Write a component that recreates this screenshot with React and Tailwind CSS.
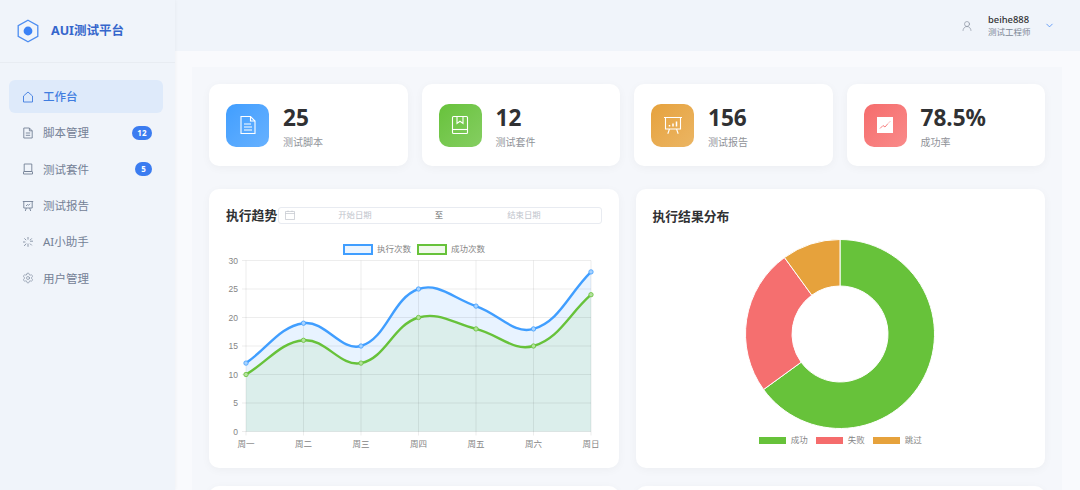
import React from 'react';
import { ChevronDown, Settings, UserRound } from 'lucide-react';

const FONT = "font-['Noto_Sans','Noto_Sans_CJK_SC',sans-serif]";

// --- Chart data ---
const DAYS = ['周一', '周二', '周三', '周四', '周五', '周六', '周日'];
const RUNS = [12, 19, 15, 25, 22, 18, 28];
const PASSED = [10, 16, 12, 20, 18, 15, 24];
const PLOT = { left: 20, right: 365, top: 21.5, bottom: 192.5 };

const xAt = (i) => PLOT.left + (i * (PLOT.right - PLOT.left)) / 6;
const yAt = (v) => PLOT.bottom - (v * (PLOT.bottom - PLOT.top)) / 30;

// same spline as a line chart with tension 0.4
function linePath(values, tension = 0.4) {
  const pts = values.map((v, i) => [xAt(i), yAt(v)]);
  const cps = pts.map((p, i) => {
    const prev = pts[i - 1] || p;
    const next = pts[i + 1] || p;
    const d01 = Math.hypot(p[0] - prev[0], p[1] - prev[1]);
    const d12 = Math.hypot(next[0] - p[0], next[1] - p[1]);
    const total = d01 + d12;
    const fa = (tension * d01) / total;
    const fb = (tension * d12) / total;
    return {
      in: [p[0] - fa * (next[0] - prev[0]), p[1] - fa * (next[1] - prev[1])],
      out: [p[0] + fb * (next[0] - prev[0]), p[1] + fb * (next[1] - prev[1])],
    };
  });
  let d = `M${pts[0][0]} ${pts[0][1]}`;
  for (let i = 1; i < pts.length; i++) {
    d += ` C${cps[i - 1].out[0]} ${cps[i - 1].out[1]} ${cps[i].in[0]} ${cps[i].in[1]} ${pts[i][0]} ${pts[i][1]}`;
  }
  return d;
}

function areaPath(values) {
  return `${linePath(values)} L${xAt(6)} ${PLOT.bottom} L${xAt(0)} ${PLOT.bottom} Z`;
}

// --- Small drawings ---
function LogoIcon() {
  return (
    <svg width="24" height="24" viewBox="0 0 24 24" fill="none">
      <path d="M12 1.2 21.8 6.6V17.4L12 22.8 2.2 17.4V6.6Z" stroke="#4d8df0" strokeWidth="1.3" />
      <circle cx="12" cy="12" r="4.4" fill="#3b82f6" />
    </svg>
  );
}

function HouseIcon() {
  return (
    <svg width="12" height="12" viewBox="0 0 12 12" fill="none" stroke="currentColor" strokeWidth="0.9">
      <path d="M1.5 5 6 1l4.5 4v6h-9z" />
    </svg>
  );
}

function DocIcon() {
  return (
    <svg width="12" height="12" viewBox="0 0 12 12" fill="none" stroke="currentColor" strokeWidth="0.9">
      <path d="M1.8 1h5.6l2.8 2.8V11H1.8z" />
      <path d="M7.4 1v2.8h2.8M3.8 6h4.4M3.8 8.3h4.4" />
    </svg>
  );
}

function NotebookIcon() {
  return (
    <svg width="12" height="12" viewBox="0 0 12 12" fill="none" stroke="currentColor" strokeWidth="0.9">
      <path d="M2.2 1h7.6v7.5H2.2zM1.5 8.5V11h9V8.5" />
      <path d="M2.2 8.5h7.6" />
    </svg>
  );
}

function BoardIcon() {
  return (
    <svg width="12" height="12" viewBox="0 0 12 12" fill="none" stroke="currentColor" strokeWidth="0.9">
      <path d="M.8 1.5h10.4M1.8 1.5v6.5h8.4V1.5M4.3 8l-1 3M7.7 8l1 3" />
      <path d="M4 6 5.5 4.5l1 .8L8 3.8" />
    </svg>
  );
}

function BurstIcon() {
  return (
    <svg width="12" height="12" viewBox="0 0 12 12" fill="none" stroke="currentColor" strokeWidth="0.8">
      <path d="M6 1v2.6M6 7.6v3.2M1 6h2.4M8 5.2h3M2.4 2.4l1.8 1.8M8 7.6l1.8 1.8M9.8 2.4 8 4.2M4.2 7.6 2.2 10" />
    </svg>
  );
}

function StatDoc() {
  return (
    <svg width="20" height="20" viewBox="0 0 20 20" fill="none" stroke="white" strokeWidth="1.1">
      <path d="M3 1.5h9.5l4.5 4.5v12.5H3z" />
      <path d="M12.5 1.5V6H17" />
      <path d="M6 9h7M6 12h8M6 15h8" />
    </svg>
  );
}

function StatBook() {
  return (
    <svg width="20" height="20" viewBox="0 0 20 20" fill="none" stroke="white" strokeWidth="1.1">
      <path d="M3.5 1.5h13a1 1 0 0 1 1 1v15a1 1 0 0 1-1 1h-13a1 1 0 0 1-1-1v-15a1 1 0 0 1 1-1z" />
      <path d="M2.5 14.5h15" />
      <path d="M7 1.5v7l3-2.2 3 2.2v-7" />
    </svg>
  );
}

function StatBoard() {
  return (
    <svg width="20" height="20" viewBox="0 0 20 20" fill="none" stroke="white" strokeWidth="1.1">
      <path d="M1 2.5h18M2.5 2.5v11.5h15V2.5M6.5 14l-1.7 4.8M13.5 14l1.7 4.8" />
      <path d="M6.5 11.5V10M10 11.5V8.5M13.5 11.5V6.5" strokeWidth="1.5" />
    </svg>
  );
}

function StatTrend() {
  return (
    <svg width="16" height="16" viewBox="0 0 16 16">
      <rect width="16" height="16" fill="white" />
      <path d="M3 11.5 6 8.5l2 1.5 3-3.5" fill="none" stroke="#f78080" strokeWidth="1" />
      <path d="M12 5.5l1-1" fill="none" stroke="#f78080" strokeWidth="1" />
    </svg>
  );
}

function CalendarIcon() {
  return (
    <svg width="10" height="10" viewBox="0 0 10 10" fill="none" stroke="#c0c4cc" strokeWidth="0.7">
      <path d="M.5 1.5h9v8h-9zM.5 3.5h9M3 .5v1.5M7 .5v1.5" />
    </svg>
  );
}

// --- Sidebar ---
const MENU = [
  { label: '工作台', icon: <HouseIcon />, active: true },
  { label: '脚本管理', icon: <DocIcon />, badge: '12' },
  { label: '测试套件', icon: <NotebookIcon />, badge: '5' },
  { label: '测试报告', icon: <BoardIcon /> },
  { label: 'AI小助手', icon: <BurstIcon /> },
  { label: '用户管理', icon: <Settings size={12} strokeWidth={1.2} /> },
];

function Sidebar() {
  return (
    <aside className="relative z-10 flex w-[175px] shrink-0 flex-col bg-[#f0f4fa] shadow-[1px_0_3px_rgba(0,0,0,0.03)]">
      <div className="flex h-[63px] items-center gap-[11px] border-b border-[#e8ecf2] pl-[16px]">
        <LogoIcon />
        <span className="text-[12.5px] font-bold text-[#3566cc]">AUI测试平台</span>
      </div>
      <nav className="flex flex-col gap-[3.4px] px-[9px] pt-[17px]">
        {MENU.map((item) => (
          <div
            key={item.label}
            className={`flex h-[33px] w-[154px] items-center rounded-[6px] pl-[13px] pr-[11px] text-[11.5px] ${
              item.active ? 'bg-[#deeafa] font-medium text-[#3f7de0]' : 'text-[#748196]'
            }`}
          >
            <span className="flex w-[21px] shrink-0">{item.icon}</span>
            <span className="flex-1">{item.label}</span>
            {item.badge && (
              <span className="flex h-[14px] min-w-[17px] items-center justify-center rounded-full bg-[#3b7cf0] px-[5.5px] text-[8px] font-bold text-white">
                {item.badge}
              </span>
            )}
          </div>
        ))}
      </nav>
    </aside>
  );
}

// --- Stat cards ---
const STATS = [
  { value: '25', label: '测试脚本', icon: <StatDoc />, bg: 'bg-linear-to-br from-[#409eff] to-[#66b1ff]' },
  { value: '12', label: '测试套件', icon: <StatBook />, bg: 'bg-linear-to-br from-[#67c23a] to-[#85ce61]' },
  { value: '156', label: '测试报告', icon: <StatBoard />, bg: 'bg-linear-to-br from-[#e6a23c] to-[#ebb563]' },
  { value: '78.5%', label: '成功率', icon: <StatTrend />, bg: 'bg-linear-to-br from-[#f56c6c] to-[#f98a8a]' },
];

const CARD = 'rounded-[10px] bg-white shadow-[0_2px_10px_rgba(0,0,0,0.04)]';

function StatCard({ value, label, icon, bg }) {
  return (
    <div className={`${CARD} flex h-[82px] items-center gap-[14px] pl-[17px]`}>
      <div className={`flex size-[43px] items-center justify-center rounded-[10px] ${bg}`}>{icon}</div>
      <div className="pt-[2px]">
        <div className="text-[22.6px] leading-[30px] font-bold text-[#303133]">{value}</div>
        <div className="mt-[2px] text-[10px] leading-[14px] text-[#909399]">{label}</div>
      </div>
    </div>
  );
}

// --- Charts ---
function TrendChart() {
  const grid = [0, 5, 10, 15, 20, 25, 30];
  const axisFont = "'Liberation Sans','Noto Sans CJK SC',sans-serif";
  return (
    <svg width="376" height="220" className="mt-[13px] block" fontFamily={axisFont} fontSize="8.5" fill="#858585">
      {/* legend */}
      <rect x="118" y="6" width="28" height="9" fill="#ecf5ff" stroke="#409eff" strokeWidth="2" />
      <text x="151" y="13">执行次数</text>
      <rect x="192" y="6" width="28" height="9" fill="#f0f9eb" stroke="#67c23a" strokeWidth="2" />
      <text x="225" y="13">成功次数</text>

      {/* fills under the lines */}
      <path d={areaPath(RUNS)} fill="#409eff" fillOpacity="0.12" />
      <path d={areaPath(PASSED)} fill="#67c23a" fillOpacity="0.1" />

      {/* grid */}
      {grid.map((v) => (
        <g key={v}>
          <line x1={PLOT.left - 4} x2={PLOT.right} y1={yAt(v)} y2={yAt(v)} stroke="#000" strokeOpacity="0.07" strokeWidth="1" />
          <text x={PLOT.left - 8} y={yAt(v) + 3} textAnchor="end">{v}</text>
        </g>
      ))}
      {DAYS.map((day, i) => (
        <g key={day}>
          <line x1={xAt(i)} x2={xAt(i)} y1={PLOT.top} y2={PLOT.bottom + 4} stroke="#000" strokeOpacity="0.07" strokeWidth="1" />
          <text x={xAt(i)} y={PLOT.bottom + 15} textAnchor="middle">{day}</text>
        </g>
      ))}

      {/* lines */}
      <path d={linePath(RUNS)} fill="none" stroke="#409eff" strokeWidth="2.4" />
      <path d={linePath(PASSED)} fill="none" stroke="#67c23a" strokeWidth="2.4" />
      {RUNS.map((v, i) => (
        <circle key={i} cx={xAt(i)} cy={yAt(v)} r="2.2" fill="#a6d2ff" stroke="#409eff" strokeWidth="0.8" />
      ))}
      {PASSED.map((v, i) => (
        <circle key={i} cx={xAt(i)} cy={yAt(v)} r="2.2" fill="#b3e19d" stroke="#67c23a" strokeWidth="0.8" />
      ))}
    </svg>
  );
}

function sector(from, to, outer = 94.5, inner = 48) {
  const c = 96;
  const pt = (pct, r) => {
    const a = (pct / 100) * 2 * Math.PI;
    return [c + r * Math.sin(a), c - r * Math.cos(a)];
  };
  const large = to - from > 50 ? 1 : 0;
  const [a, b] = pt(from, outer);
  const [e, f] = pt(to, outer);
  const [g, h] = pt(to, inner);
  const [i, j] = pt(from, inner);
  return `M${a} ${b} A${outer} ${outer} 0 ${large} 1 ${e} ${f} L${g} ${h} A${inner} ${inner} 0 ${large} 0 ${i} ${j} Z`;
}

function ResultChart() {
  return (
    <div className="mt-[12px] flex flex-col items-center">
      <svg width="192" height="192" className="block">
        <path d={sector(0, 65)} fill="#67c23a" stroke="white" strokeWidth="1" />
        <path d={sector(65, 90)} fill="#f56c6c" fillOpacity="0.98" stroke="white" strokeWidth="1" />
        <path d={sector(90, 100)} fill="#e6a23c" stroke="white" strokeWidth="1" />
      </svg>
      <div className="mt-[5px] flex items-center gap-[8px] font-['Liberation_Sans','Noto_Sans_CJK_SC',sans-serif] text-[8.5px] leading-[10px] text-[#858585]">
        <LegendItem color="bg-[#67c23a]" label="成功" />
        <LegendItem color="bg-[#f56c6c]" label="失败" />
        <LegendItem color="bg-[#e6a23c]" label="跳过" />
      </div>
    </div>
  );
}

function LegendItem({ color, label }) {
  return (
    <div className="flex items-center gap-[5px]">
      <span className={`h-[7px] w-[27px] ${color}`} />
      <span>{label}</span>
    </div>
  );
}

export default function App() {
  return (
    <div className={`${FONT} flex h-screen overflow-hidden bg-[#f9fafd]`}>
      <Sidebar />
      <div className="flex min-w-0 flex-1 flex-col">
        <header className="flex h-[51px] shrink-0 items-center justify-end bg-[#f0f4fa] pr-[25px]">
          <UserRound size={12} strokeWidth={1.2} className="text-[#7d8796]" />
          <div className="ml-[15px] w-[56px]">
            <div className="text-[9.4px] leading-[13px] font-medium text-[#303133]">beihe888</div>
            <div className="text-[8.5px] leading-[12px] text-[#7d8796]">测试工程师</div>
          </div>
          <ChevronDown size={11} strokeWidth={1.6} className="text-[#3b82f6]" />
        </header>
        <main className="flex-1 overflow-hidden pt-[16px] pr-[18px] pl-[17px]">
          <div className="bg-[#f5f7fb] p-[17px]">
            <div className="grid grid-cols-4 gap-[14px]">
              {STATS.map((s) => (
                <StatCard key={s.label} {...s} />
              ))}
            </div>
            <div className="mt-[23px] grid grid-cols-2 gap-x-[17px] gap-y-[18px]">
              <section className={`${CARD} h-[279px] px-[17px] pt-[17px]`}>
                <div className="flex h-[20px] items-center">
                  <h3 className="w-[52px] shrink-0 text-[12.8px] font-bold text-[#303133]">执行趋势</h3>
                  <div className="mb-[2px] flex h-[17px] w-[324px] shrink-0 items-center rounded-[3px] border border-[#e8ebf1] pl-[6px] text-[8.4px] text-[#c0c4cc]">
                    <CalendarIcon />
                    <span className="w-[120px] text-center">开始日期</span>
                    <span className="w-[48px] text-center text-[#606266]">至</span>
                    <span className="w-[122px] text-center">结束日期</span>
                  </div>
                </div>
                <TrendChart />
              </section>
              <section className={`${CARD} h-[279px] px-[17px] pt-[17px]`}>
                <h3 className="h-[20px] text-[12.8px] leading-[20px] font-bold text-[#303133]">执行结果分布</h3>
                <ResultChart />
              </section>
              <section className={`${CARD} h-[200px]`} />
              <section className={`${CARD} h-[200px]`} />
            </div>
          </div>
        </main>
      </div>
    </div>
  );
}
